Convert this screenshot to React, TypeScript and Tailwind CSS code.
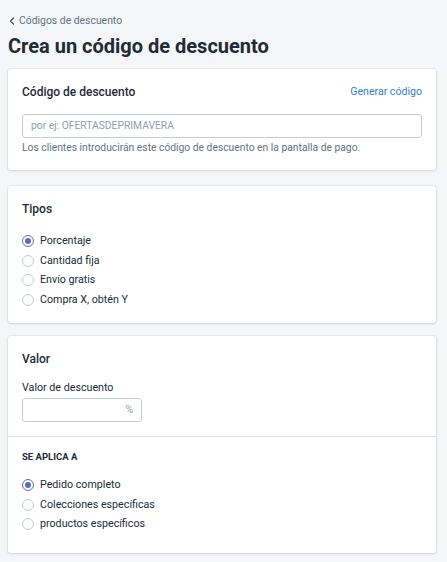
import { ChevronLeft } from 'lucide-react';

function Radio({ label, checked = false }: { label: string; checked?: boolean }) {
  return (
    <label className="flex h-[19.5px] items-center gap-[6px]">
      <span
        className={
          checked
            ? 'flex h-[12px] w-[12px] items-center justify-center rounded-full border border-[#5c6ac4] bg-white'
            : 'h-[12px] w-[12px] rounded-full border border-[#c4cdd5] bg-[#fbfcfd]'
        }
      >
        {checked && <span className="h-[6px] w-[6px] rounded-full bg-[#5c6ac4]" />}
      </span>
      <span className="text-[10.7px] text-[#212b36]">{label}</span>
    </label>
  );
}

function Card({ children }: { children: React.ReactNode }) {
  return (
    <section className="ml-2 mr-[11px] rounded-[3px] bg-white shadow-[0_0_0_1px_rgba(63,63,68,0.05),0_1px_3px_0_rgba(63,63,68,0.15)]">
      {children}
    </section>
  );
}

export default function App() {
  return (
    <div className="min-h-[562px] bg-[#f4f6f8] pb-4 font-['Roboto',sans-serif] text-[#212b36]">
      <div className="flex items-center gap-[1px] px-[6px] pt-[13px] text-[10.4px] text-[#637381]">
        <ChevronLeft size={12} strokeWidth={2.5} className="text-[#454f5b]" />
        <span>Códigos de descuento</span>
      </div>
      <h1 className="px-2 pt-[3px] text-[20px] font-bold leading-7">Crea un código de descuento</h1>

      <div className="mt-[9px] flex flex-col">
        <Card>
          <div className="px-[14px] pb-[14px] pt-[13px]">
            <div className="flex items-center justify-between">
              <h2 className="text-[12px] font-medium leading-5">Código de descuento</h2>
              <button type="button" className="text-[10.6px] text-[#2f7fd1]">
                Generar código
              </button>
            </div>
            <div className="mt-[12px] flex h-[24px] items-center rounded-[3px] border border-[#c4cdd5] px-[8px] shadow-[inset_0_1px_0_0_rgba(99,115,129,0.05)]">
              <span className="text-[10.3px] text-[#919eab]">por ej: OFERTASDEPRIMAVERA</span>
            </div>
            <p className="mt-[2px] text-[10.3px] leading-4 text-[#637381]">
              Los clientes introducirán este código de descuento en la pantalla de pago.
            </p>
          </div>
        </Card>

        <div className="mt-[16px]">
          <Card>
            <div className="px-[14px] pb-[13px] pt-[13px]">
              <h2 className="text-[12px] font-medium leading-5">Tipos</h2>
              <div className="mt-[13px] flex flex-col">
                <Radio label="Porcentaje" checked />
                <Radio label="Cantidad fija" />
                <Radio label="Envío gratis" />
                <Radio label="Compra X, obtén Y" />
              </div>
            </div>
          </Card>
        </div>

        <div className="mt-[13px]">
          <Card>
            <div className="px-[14px] pb-[14px] pt-[13px]">
              <h2 className="text-[12px] font-medium leading-5">Valor</h2>
              <p className="mt-[11px] text-[10.7px] leading-4 text-[#212b36]">Valor de descuento</p>
              <div className="mt-[2px] flex h-[24px] w-[120px] items-center justify-end rounded-[3px] border border-[#c4cdd5] px-[8px]">
                <span className="text-[10.3px] text-[#919eab]">%</span>
              </div>
            </div>
            <div className="border-t border-[#dfe3e8] px-[14px] pb-[19px] pt-[12px]">
              <h3 className="text-[9.5px] font-bold uppercase leading-4">Se aplica a</h3>
              <div className="mt-[11px] flex flex-col">
                <Radio label="Pedido completo" checked />
                <Radio label="Colecciones específicas" />
                <Radio label="productos específicos" />
              </div>
            </div>
          </Card>
        </div>
      </div>
    </div>
  );
}
